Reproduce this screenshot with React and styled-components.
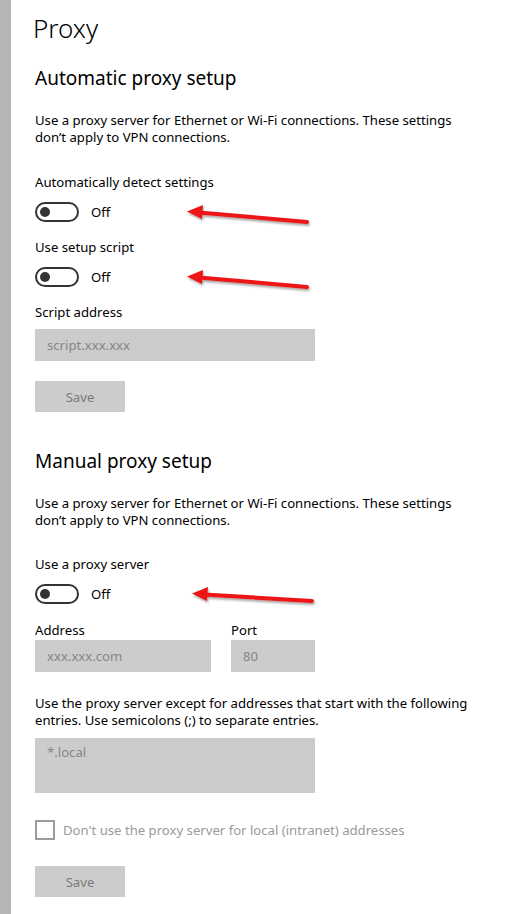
import React from "react";
import styled, { createGlobalStyle } from "styled-components";

const GlobalStyle = createGlobalStyle`
  html, body {
    margin: 0;
    padding: 0;
    background: #ffffff;
  }
  body {
    font-family: "Noto Sans", "Open Sans", sans-serif;
    color: #000000;
  }
`;

const Page = styled.div`
  display: flex;
  width: 516px;
  min-height: 914px;
  background: #ffffff;
`;

const SideStrip = styled.div`
  width: 11px;
  flex-shrink: 0;
  background: #b5b5b5;
`;

const Content = styled.div`
  display: flex;
  flex-direction: column;
  align-items: flex-start;
  padding: 10px 0 0 24px;
  width: 470px;
`;

const PageTitle = styled.h1`
  margin: 0 0 0 -2px;
  font-size: 26px;
  line-height: 36px;
  font-weight: 300;
`;

const SectionTitle = styled.h2`
  margin: ${({ $top }) => $top}px 0 0 0;
  font-size: 19px;
  line-height: 28px;
  font-weight: 400;
`;

const Text = styled.p`
  margin: ${({ $top }) => $top}px 0 0 0;
  font-size: 13.15px;
  line-height: 17px;
  width: 440px;
`;

const Label = styled.div`
  margin-top: ${({ $top }) => $top}px;
  font-size: 13.15px;
  line-height: 18px;
`;

const ToggleRow = styled.div`
  position: relative;
  display: flex;
  align-items: center;
  gap: 12px;
  margin-top: ${({ $top }) => $top}px;
  height: 20px;
`;

const Switch = styled.div`
  position: relative;
  box-sizing: border-box;
  width: 44px;
  height: 20px;
  border: 2px solid #333333;
  border-radius: 10px;

  &::after {
    content: "";
    position: absolute;
    left: 3px;
    top: 3px;
    width: 10px;
    height: 10px;
    border-radius: 50%;
    background: #333333;
  }
`;

const SwitchState = styled.span`
  font-size: 13.15px;
  line-height: 18px;
`;

const ArrowMark = styled.svg`
  position: absolute;
  left: ${({ $left }) => $left}px;
  top: -2px;
  overflow: visible;
`;

const Field = styled.div`
  box-sizing: border-box;
  margin-top: ${({ $top }) => $top || 0}px;
  width: ${({ $width }) => $width}px;
  height: ${({ $height }) => $height || 32}px;
  padding: ${({ $tall }) => ($tall ? "5px 12px" : "0 12px")};
  display: flex;
  align-items: ${({ $tall }) => ($tall ? "flex-start" : "center")};
  background: #cccccc;
  color: #868686;
  font-size: 13.15px;
  line-height: 19px;
`;

const FieldRow = styled.div`
  display: flex;
  gap: 20px;
  margin-top: ${({ $top }) => $top}px;
`;

const FieldGroup = styled.div`
  display: flex;
  flex-direction: column;
  gap: 1px;
`;

const SaveButton = styled.button`
  margin-top: ${({ $top }) => $top}px;
  width: 90px;
  height: 31px;
  border: none;
  background: #cccccc;
  color: #7a7a7a;
  font-family: inherit;
  font-size: 13.15px;
  padding: 0;
`;

const CheckRow = styled.label`
  display: flex;
  align-items: center;
  gap: 8px;
  margin-top: ${({ $top }) => $top}px;
  color: #9a9a9a;
  font-size: 13.15px;
  line-height: 18px;
`;

const CheckBox = styled.span`
  box-sizing: border-box;
  width: 20px;
  height: 20px;
  border: 2px solid #9c9c9c;
`;

const Arrow = ({ left, drop = 10 }) => (
  <ArrowMark $left={left} width="126" height="24" viewBox="0 0 126 24">
    <defs>
      <filter id={`sh${left}`} x="-10%" y="-50%" width="120%" height="200%">
        <feDropShadow dx="1" dy="2" stdDeviation="1.2" floodColor="#000" floodOpacity="0.35" />
      </filter>
    </defs>
    <g filter={`url(#sh${left})`}>
      <line x1="14" y1="12.5" x2="122" y2={12 + drop} stroke="#ec1515" strokeWidth="4" strokeLinecap="round" />
      <polygon points={`2,11.5 18,5 17,19`} fill="#ec1515" />
    </g>
  </ArrowMark>
);

const ToggleSetting = ({ label, labelTop, rowTop, arrowLeft, drop }) => (
  <>
    <Label $top={labelTop}>{label}</Label>
    <ToggleRow $top={rowTop}>
      <Switch />
      <SwitchState>Off</SwitchState>
      <Arrow left={arrowLeft} drop={drop} />
    </ToggleRow>
  </>
);

const App = () => (
  <>
    <GlobalStyle />
    <Page>
      <SideStrip />
      <Content>
        <PageTitle>Proxy</PageTitle>

        <SectionTitle $top={18}>Automatic proxy setup</SectionTitle>
        <Text $top={20}>
          Use a proxy server for Ethernet or Wi-Fi connections. These settings
          don’t apply to VPN connections.
        </Text>

        <ToggleSetting label="Automatically detect settings" labelTop={27} rowTop={11} arrowLeft={150} drop={10} />
        <ToggleSetting label="Use setup script" labelTop={16} rowTop={11} arrowLeft={150} drop={10} />

        <Label $top={16}>Script address</Label>
        <Field $top={8} $width={280}>script.xxx.xxx</Field>
        <SaveButton $top={20}>Save</SaveButton>

        <SectionTitle $top={35}>Manual proxy setup</SectionTitle>
        <Text $top={20}>
          Use a proxy server for Ethernet or Wi-Fi connections. These settings
          don’t apply to VPN connections.
        </Text>

        <ToggleSetting label="Use a proxy server" labelTop={26} rowTop={11} arrowLeft={155} drop={7} />

        <FieldRow $top={17}>
          <FieldGroup>
            <Label $top={0}>Address</Label>
            <Field $width={176}>xxx.xxx.com</Field>
          </FieldGroup>
          <FieldGroup>
            <Label $top={0}>Port</Label>
            <Field $width={84}>80</Field>
          </FieldGroup>
        </FieldRow>

        <Text $top={23}>
          Use the proxy server except for addresses that start with the following
          entries. Use semicolons (;) to separate entries.
        </Text>
        <Field $top={9} $width={280} $height={55} $tall>*.local</Field>

        <CheckRow $top={27}>
          <CheckBox />
          Don't use the proxy server for local (intranet) addresses
        </CheckRow>
        <SaveButton $top={26}>Save</SaveButton>
      </Content>
    </Page>
  </>
);

export default App;
